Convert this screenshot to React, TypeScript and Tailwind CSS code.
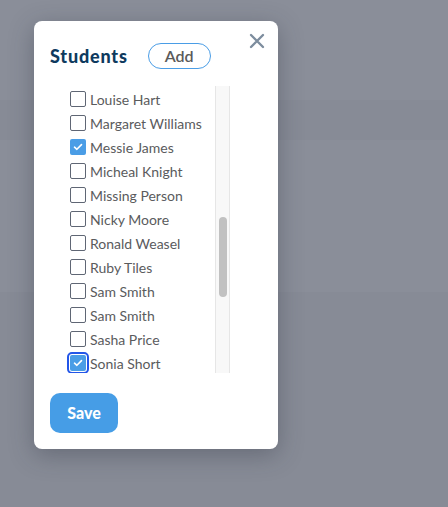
import { useState } from "react"

// Students picker modal over a dimmed page
const STUDENTS: { name: string; checked: boolean }[] = [
  { name: "Louise Hart", checked: false },
  { name: "Margaret Williams", checked: false },
  { name: "Messie James", checked: true },
  { name: "Micheal Knight", checked: false },
  { name: "Missing Person", checked: false },
  { name: "Nicky Moore", checked: false },
  { name: "Ronald Weasel", checked: false },
  { name: "Ruby Tiles", checked: false },
  { name: "Sam Smith", checked: false },
  { name: "Sam Smith", checked: false },
  { name: "Sasha Price", checked: false },
  { name: "Sonia Short", checked: true },
]

function Box({ checked, focused }: { checked: boolean; focused?: boolean }) {
  return (
    <span
      className={`w-4 h-4 shrink-0 flex items-center justify-center rounded-[2px] ${
        checked ? "bg-[#4a9de6]" : "bg-white border border-[#5f6674]"
      } ${focused ? "outline-2 outline-offset-[1px] outline-[#2356e8]" : ""}`}
    >
      {checked && (
        <svg width="10" height="8" viewBox="0 0 10 8" fill="none">
          <path d="M1.5 4.2 L3.9 6.3 L8.5 1.6" stroke="white" strokeWidth="1.6" strokeLinecap="round" strokeLinejoin="round" />
        </svg>
      )}
    </span>
  )
}

export default function App() {
  const [items, setItems] = useState(STUDENTS)

  return (
    <div className="relative w-full h-[507px] bg-[#8a8e99] overflow-hidden font-['Lato',sans-serif]">
      {/* faint page bands behind the overlay */}
      <div className="h-[100px]" />
      <div className="h-[40px] bg-[#878b96]" />
      <div className="h-[152px]" />
      <div className="h-[215px] bg-[#878b96]" />

      {/* ── MODAL ── */}
      <div className="absolute left-[34px] top-[21px] w-[244px] h-[428px] bg-white rounded-lg shadow-[0_6px_24px_rgba(40,45,60,0.35)] pt-[22px] pl-4">
        <button className="absolute right-[13px] top-[12px] text-[#7d8d9e]">
          <svg width="16" height="16" viewBox="0 0 16 16" fill="none">
            <path d="M2 2 L14 14 M14 2 L2 14" stroke="currentColor" strokeWidth="2.4" strokeLinecap="round" />
          </svg>
        </button>

        <div className="flex items-center gap-5 h-[26px]">
          <h2 className="text-[18px] font-black text-[#0e3a5e] tracking-[0.8px]">Students</h2>
          <button className="h-[26px] w-[63px] rounded-full border border-[#4a9de6] text-[#5a5a5a] text-[16px] font-semibold leading-none">
            Add
          </button>
        </div>

        {/* ── LIST + SCROLLBAR ── */}
        <div className="mt-[17px] ml-4 w-[164px] h-[287px] flex overflow-hidden">
          <div className="flex-1 pt-[1px]">
            {items.map((s, i) => (
              <label
                key={i}
                className="h-6 flex items-center gap-1 pl-1 text-[14px] text-[#5a5b5d] cursor-pointer"
                onClick={() =>
                  setItems(items.map((x, j) => (j === i ? { ...x, checked: !x.checked } : x)))
                }
              >
                <Box checked={s.checked} focused={i === items.length - 1} />
                <span className="whitespace-nowrap">{s.name}</span>
              </label>
            ))}
          </div>
          <div className="w-[15px] h-full bg-[#f8f8f8] border-l border-r border-[#e6e6e6] pt-[131px] flex justify-center">
            <div className="w-[8px] h-[80px] rounded-full bg-[#c1c1c1]" />
          </div>
        </div>

        <button className="mt-5 w-[68px] h-10 rounded-[10px] bg-[#469de6] text-white text-[16px] font-black">
          Save
        </button>
      </div>
    </div>
  )
}
